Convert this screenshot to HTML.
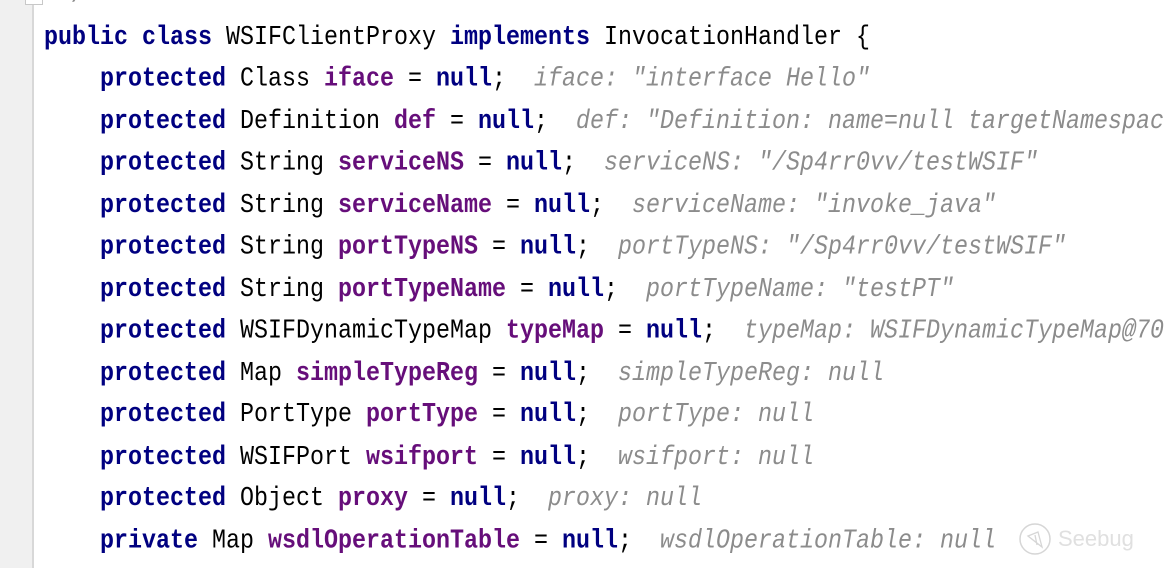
<!DOCTYPE html>
<html><head><meta charset="utf-8"><style>
html,body{margin:0;padding:0;width:1164px;height:568px;overflow:hidden;background:#fff}
.g{position:absolute;left:0;top:0;width:32px;height:568px;background:#f0f0f0}
.gl{position:absolute;left:32px;top:0;width:2px;height:568px;background:#d8d8d8}
.fold{position:absolute;left:25px;top:-6px;width:16px;height:9px;border:1px solid #c8c8c8;background:#fff}
pre{position:absolute;left:44px;top:-25px;margin:0;font-family:"Liberation Mono",monospace;font-size:23.33px;line-height:36.52px;color:#000;white-space:pre;transform:scaleY(1.15);transform-origin:0 0}
b{color:#000080;font-weight:bold}
.f{color:#660e7a;font-weight:bold}
i{color:#8c8c8c;font-style:italic;font-weight:normal}
.wm{position:absolute;font-family:"Liberation Sans",sans-serif;font-size:22px;color:#e0e0e0}
</style></head><body>
<div class="g"></div><div class="gl"></div><div class="fold"></div>
<pre>  <i>/</i>
<b>public class</b> WSIFClientProxy <b>implements</b> InvocationHandler {
    <b>protected</b> Class <span class="f">iface</span> = <b>null</b>;  <i>iface: "interface Hello"</i>
    <b>protected</b> Definition <span class="f">def</span> = <b>null</b>;  <i>def: "Definition: name=null targetNamespace</i>
    <b>protected</b> String <span class="f">serviceNS</span> = <b>null</b>;  <i>serviceNS: "/Sp4rr0vv/testWSIF"</i>
    <b>protected</b> String <span class="f">serviceName</span> = <b>null</b>;  <i>serviceName: "invoke_java"</i>
    <b>protected</b> String <span class="f">portTypeNS</span> = <b>null</b>;  <i>portTypeNS: "/Sp4rr0vv/testWSIF"</i>
    <b>protected</b> String <span class="f">portTypeName</span> = <b>null</b>;  <i>portTypeName: "testPT"</i>
    <b>protected</b> WSIFDynamicTypeMap <span class="f">typeMap</span> = <b>null</b>;  <i>typeMap: WSIFDynamicTypeMap@70</i>
    <b>protected</b> Map <span class="f">simpleTypeReg</span> = <b>null</b>;  <i>simpleTypeReg: null</i>
    <b>protected</b> PortType <span class="f">portType</span> = <b>null</b>;  <i>portType: null</i>
    <b>protected</b> WSIFPort <span class="f">wsifport</span> = <b>null</b>;  <i>wsifport: null</i>
    <b>protected</b> Object <span class="f">proxy</span> = <b>null</b>;  <i>proxy: null</i>
    <b>private</b> Map <span class="f">wsdlOperationTable</span> = <b>null</b>;  <i>wsdlOperationTable: null</i></pre>
<svg style="position:absolute;left:1018px;top:521px" width="36" height="36" viewBox="0 0 36 36"><circle cx="17" cy="18" r="15" fill="none" stroke="#d6d6d6" stroke-width="1.5"/><path d="M10 15 L20 11 L24 26 Z M17 14 L19 24" fill="none" stroke="#d6d6d6" stroke-width="1.3"/></svg>
<div class="wm" style="left:1058px;top:526px">Seebug</div>
</body></html>
